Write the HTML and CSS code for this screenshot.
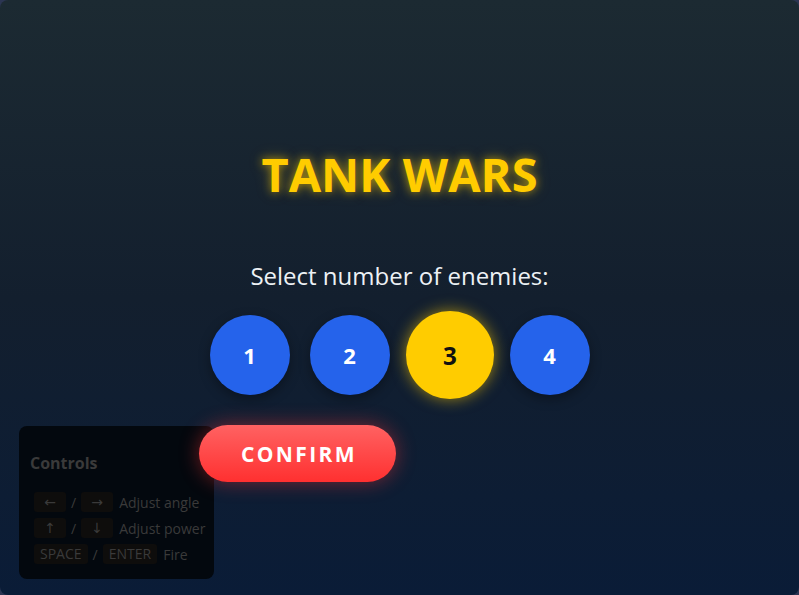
FILE: index.html
```html
<!DOCTYPE html>
<html lang="en">
<head>
<meta charset="utf-8">
<title>Tank Wars</title>
<link rel="stylesheet" href="styles.css">
</head>
<body>
<div class="game">
  <main class="menu">
    <h1 class="title">TANK WARS</h1>
    <p class="prompt">Select number of enemies:</p>
    <div class="choices">
      <button class="choice">1</button>
      <button class="choice">2</button>
      <button class="choice is-selected">3</button>
      <button class="choice">4</button>
    </div>
    <button class="confirm">CONFIRM</button>
  </main>

  <aside class="controls">
    <h3 class="controls-title">Controls</h3>
    <div class="control-row">
      <span class="key">←</span><span class="sep">/</span><span class="key">→</span><span class="desc">Adjust angle</span>
    </div>
    <div class="control-row">
      <span class="key">↑</span><span class="sep">/</span><span class="key">↓</span><span class="desc">Adjust power</span>
    </div>
    <div class="control-row">
      <span class="key">SPACE</span><span class="sep">/</span><span class="key">ENTER</span><span class="desc">Fire</span>
    </div>
  </aside>
</div>
</body>
</html>
```

FILE: styles.css
```css
html, body {
  margin: 0;
  height: 100%;
}

body {
  background: #2b3552;
  font-family: "Open Sans", "DejaVu Sans", sans-serif;
  overflow: hidden;
}

.game {
  position: relative;
  height: 100%;
  border-radius: 8px;
  background: linear-gradient(180deg, #1c2a32 0%, #131f2e 50%, #0a1c37 100%);
  overflow: hidden;
}

.menu {
  display: flex;
  flex-direction: column;
  align-items: center;
  padding-top: 151px;
}

.title {
  margin: 0;
  font-size: 47px;
  line-height: 47px;
  font-weight: 700;
  color: #ffcc00;
  text-shadow: 0 0 8px rgba(255, 204, 0, 0.55), 0 0 16px rgba(255, 204, 0, 0.25);
}

.prompt {
  margin: 66px 0 0;
  font-size: 24px;
  line-height: 24px;
  color: #edf1f5;
}

.choices {
  display: flex;
  gap: 20px;
  margin-top: 27px;
}

.choice {
  width: 80px;
  height: 80px;
  border: none;
  border-radius: 50%;
  background: #2563eb;
  color: #fff;
  font-family: inherit;
  font-size: 22px;
  font-weight: 700;
  box-shadow: 0 4px 12px rgba(0, 0, 0, 0.35);
  padding: 0;
}

.choice.is-selected {
  background: #ffcc00;
  color: #111;
  transform: scale(1.1);
  box-shadow: 0 0 14px rgba(255, 204, 0, 0.6);
}

.confirm {
  align-self: flex-start;
  position: relative;
  z-index: 2;
  margin: 30px 0 0 199px;
  width: 197px;
  height: 57px;
  padding: 0 0 0 3px;
  border: none;
  border-radius: 29px;
  background: linear-gradient(180deg, #ff6262 0%, #ff3030 100%);
  color: #fff;
  font-family: inherit;
  font-size: 21px;
  font-weight: 700;
  letter-spacing: 2.4px;
  box-shadow: 0 0 20px rgba(255, 50, 50, 0.45);
}

/* keyboard help, pinned to the lower left corner of the board */
.controls {
  position: absolute;
  left: 19px;
  top: 426px;
  width: 195px;
  box-sizing: border-box;
  padding: 27px 0 15px 11px;
  border-radius: 8px;
  background: #03080e;
  color: #3a3a3a;
  white-space: nowrap;
}

.controls-title {
  margin: 0 0 19px;
  font-size: 16px;
  line-height: 20px;
  font-weight: 700;
}

.control-row {
  display: flex;
  align-items: center;
  gap: 5px;
  margin-left: 4px;
  height: 20px;
  font-size: 14px;
}

.control-row + .control-row {
  margin-top: 6px;
}

.key {
  min-width: 32px;
  height: 20px;
  box-sizing: border-box;
  padding: 0 6px;
  border-radius: 3px;
  background: #0e0d0c;
  font-size: 14px;
  line-height: 20px;
  text-align: center;
}

.desc {
  margin-left: 1px;
}
```
